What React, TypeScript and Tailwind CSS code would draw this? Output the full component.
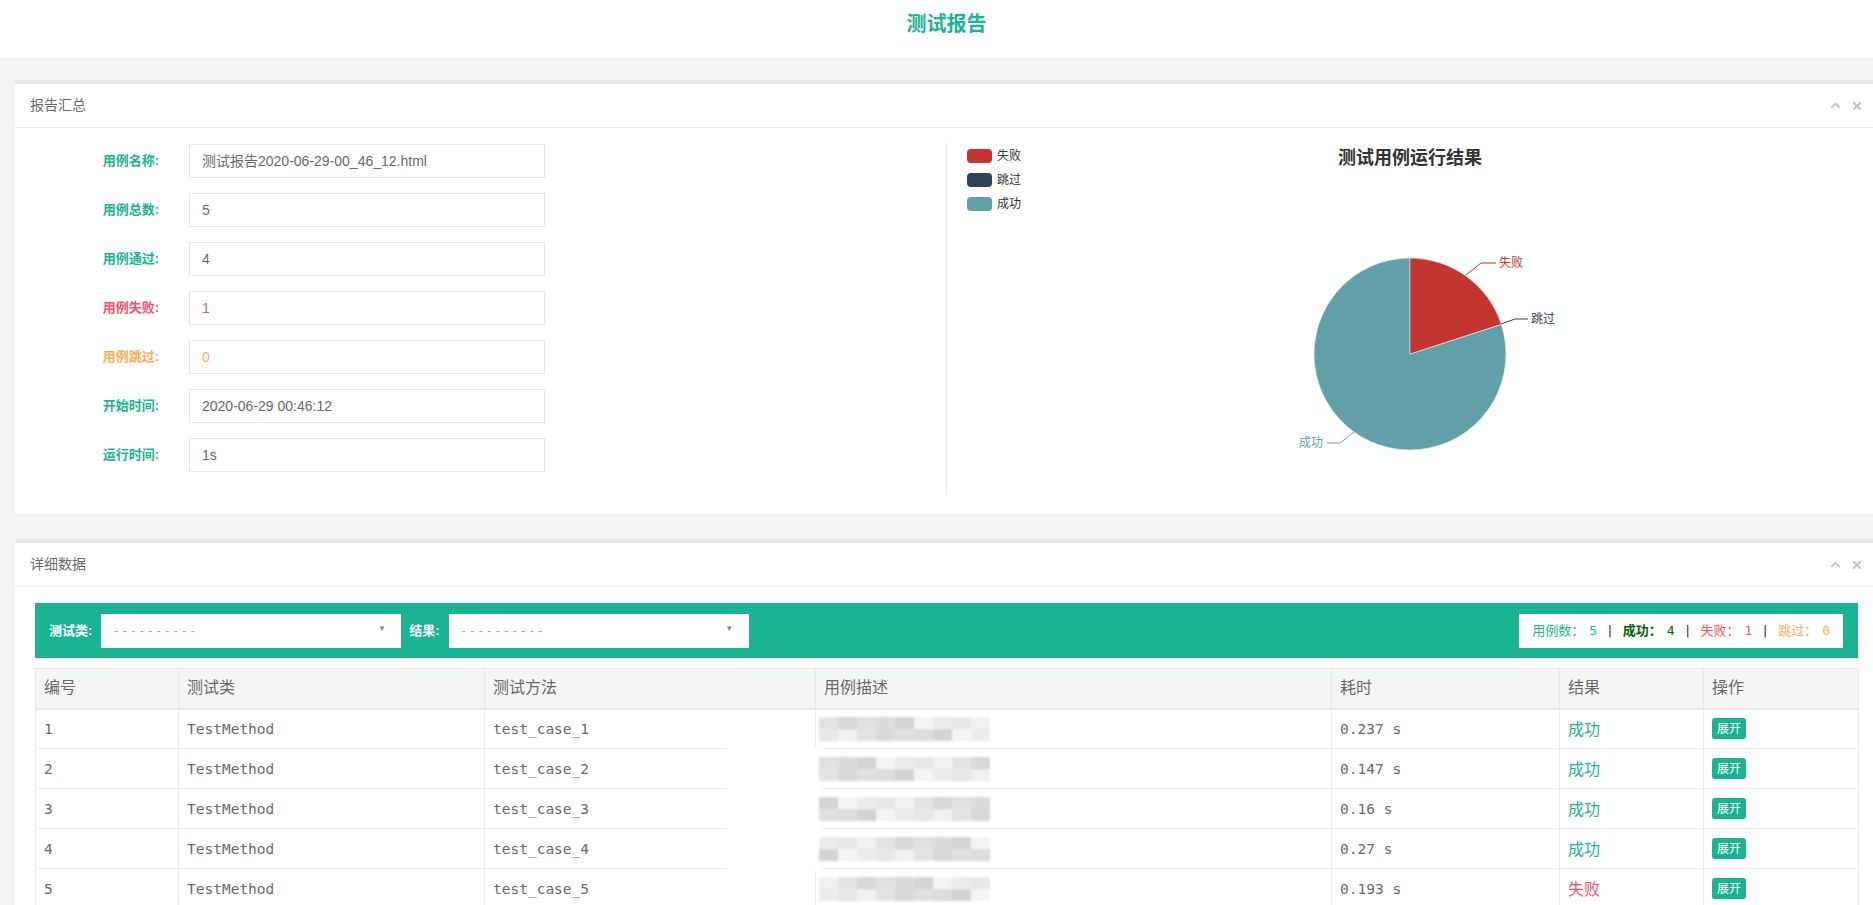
import { FaChevronUp, FaTimes } from "react-icons/fa";

// form rows in the "报告汇总" panel
const SUMMARY = [
  { label: "用例名称:", value: "测试报告2020-06-29-00_46_12.html", labelCls: "text-[#1ab394]", valueCls: "text-[#676a6c]" },
  { label: "用例总数:", value: "5", labelCls: "text-[#1ab394]", valueCls: "text-[#676a6c]" },
  { label: "用例通过:", value: "4", labelCls: "text-[#1ab394]", valueCls: "text-[#676a6c]" },
  { label: "用例失败:", value: "1", labelCls: "text-[#ed5565]", valueCls: "text-[#ed5565]" },
  { label: "用例跳过:", value: "0", labelCls: "text-[#f8ac59]", valueCls: "text-[#f8ac59]" },
  { label: "开始时间:", value: "2020-06-29 00:46:12", labelCls: "text-[#1ab394]", valueCls: "text-[#676a6c]" },
  { label: "运行时间:", value: "1s", labelCls: "text-[#1ab394]", valueCls: "text-[#676a6c]" },
];

const CASES = [
  { id: 1, cls: "TestMethod", method: "test_case_1", time: "0.237 s", ok: true, mask: false },
  { id: 2, cls: "TestMethod", method: "test_case_2", time: "0.147 s", ok: true, mask: true },
  { id: 3, cls: "TestMethod", method: "test_case_3", time: "0.16 s", ok: true, mask: true },
  { id: 4, cls: "TestMethod", method: "test_case_4", time: "0.27 s", ok: true, mask: true },
  { id: 5, cls: "TestMethod", method: "test_case_5", time: "0.193 s", ok: false, mask: false },
];

const COLS = [
  { name: "编号", w: "w-[143px]" },
  { name: "测试类", w: "w-[306px]" },
  { name: "测试方法", w: "w-[331px]" },
  { name: "用例描述", w: "w-[516px]" },
  { name: "耗时", w: "w-[228px]" },
  { name: "结果", w: "w-[144px]" },
  { name: "操作", w: "w-[155px]" },
];

const SHADES = ["#e4e4e4", "#d6d6d6", "#eeeeee", "#cdcdcd", "#dfdfdf", "#f3f3f3", "#d2d2d2", "#e9e9e9", "#dadada"];

function Panel({ title, children }: { title: string; children: React.ReactNode }) {
  return (
    <div className="bg-white border-t-4 border-t-[#e7eaec] mb-[25px]">
      <div className="h-[44px] flex items-center justify-between px-[15px] border-b border-b-[#e7eaec]">
        <span className="text-[14px] text-[#676a6c]">{title}</span>
        <div className="flex items-center gap-[10px] text-[#c4c4c4]">
          <FaChevronUp size={11} />
          <FaTimes size={12} />
        </div>
      </div>
      <div className="px-[20px] pt-[15px] pb-[20px]">{children}</div>
    </div>
  );
}

// pixelated mask over the description text
function Smudge({ seed }: { seed: number }) {
  return (
    <div className="flex flex-col blur-[0.8px] opacity-85">
      {[0, 1].map((r) => (
        <div key={r} className="flex">
          {Array.from({ length: 9 }).map((_, j) => (
            <div
              key={j}
              className="w-[19px] h-[12px]"
              style={{ backgroundColor: SHADES[(seed * 4 + r * 5 + j * 2) % SHADES.length] }}
            />
          ))}
        </div>
      ))}
    </div>
  );
}

function PieChart() {
  const cx = 463;
  const cy = 211;
  const r = 96;
  const ex = cx + r * Math.sin((72 * Math.PI) / 180);
  const ey = cy - r * Math.cos((72 * Math.PI) / 180);
  return (
    <svg width="911" height="351" className="absolute left-0 top-0">
      {/* legend */}
      {[
        { name: "失败", color: "#c23531" },
        { name: "跳过", color: "#2f4554" },
        { name: "成功", color: "#61a0a8" },
      ].map((l, i) => (
        <g key={l.name}>
          <rect x="20" y={6 + i * 24} width="25" height="14" rx="4" fill={l.color} />
          <text x="50" y={13 + i * 24} dominantBaseline="central" fontSize="12" fill="#333">
            {l.name}
          </text>
        </g>
      ))}
      <text x={cx} y="15" textAnchor="middle" dominantBaseline="central" fontSize="18" fontWeight="bold" fill="#333">
        测试用例运行结果
      </text>
      {/* slices */}
      <path d={`M${cx},${cy} L${ex},${ey} A${r},${r} 0 1,1 ${cx},${cy - r} Z`} fill="#61a0a8" stroke="#fff" strokeWidth="0.5" />
      <path d={`M${cx},${cy} L${cx},${cy - r} A${r},${r} 0 0,1 ${ex},${ey} Z`} fill="#c23531" stroke="#fff" strokeWidth="0.5" />
      {/* label lines */}
      <polyline points="519,132 534,120 549,120" fill="none" stroke="#c23531" />
      <text x="552" y="120" dominantBaseline="central" fontSize="12" fill="#c23531">失败</text>
      <polyline points="554,181 568,176 581,176" fill="none" stroke="#2f4554" />
      <text x="584" y="176" dominantBaseline="central" fontSize="12" fill="#2f4554">跳过</text>
      <polyline points="407,289 393,300 380,300" fill="none" stroke="#61a0a8" />
      <text x="376" y="300" textAnchor="end" dominantBaseline="central" fontSize="12" fill="#61a0a8">成功</text>
    </svg>
  );
}

function Select() {
  return (
    <div className="relative w-[300px] h-[34px] bg-white flex items-center px-[13px] text-[12px] text-[#a0a0a0] tracking-[4.5px]">
      ----------
      <span className="absolute right-[11px] top-[9px] text-[8px] text-[#888]">▼</span>
    </div>
  );
}

export default function App() {
  return (
    <div className="h-[905px] w-full overflow-hidden bg-[#f3f3f4] font-['Liberation_Sans','Noto_Sans_CJK_SC',sans-serif] text-[#676a6c]">
      <div className="w-[1893px]">
        {/* top title */}
        <div className="h-[58px] bg-white flex justify-center pt-[10px]">
          <h1 className="text-[20px] leading-[28px] font-bold text-[#1ab394]">测试报告</h1>
        </div>

        <div className="px-[15px] pt-[22px]">
          <Panel title="报告汇总">
            <div className="grid grid-cols-2 h-[351px]">
              <div className="border-r border-r-[#e7eaec] flex flex-col gap-[15px] pt-[1px]">
                {SUMMARY.map((s) => (
                  <div key={s.label} className="flex items-center h-[34px]">
                    <div className={`w-[124px] text-right text-[13px] font-bold ${s.labelCls}`}>{s.label}</div>
                    <div className={`ml-[30px] w-[356px] h-[34px] border border-[#e5e6e7] flex items-center px-[12px] text-[14px] ${s.valueCls}`}>
                      {s.value}
                    </div>
                  </div>
                ))}
              </div>
              <div className="relative">
                <PieChart />
              </div>
            </div>
          </Panel>

          <Panel title="详细数据">
            <div className="h-[55px] mt-[1px] bg-[#1ab394] flex items-center pl-[14px] pr-[15px]">
              <span className="text-white font-bold text-[13px]">测试类:</span>
              <div className="ml-[9px]">
                <Select />
              </div>
              <span className="ml-[8px] text-white font-bold text-[13px]">结果:</span>
              <div className="ml-[9px]">
                <Select />
              </div>
              <div className="ml-auto h-[34px] bg-white flex items-center px-[13px] text-[13px] font-['DejaVu_Sans_Mono','Noto_Sans_CJK_SC',monospace]">
                <span className="text-[#1ab394]">用例数：</span>
                <span className="ml-[5px] text-[#1ab394]">5</span>
                <span className="mx-[9px] text-[#333]">|</span>
                <span className="font-bold text-[#006400]">成功：</span>
                <span className="ml-[5px] text-[#006400]">4</span>
                <span className="mx-[9px] text-[#333]">|</span>
                <span className="text-[#ed5565]">失败：</span>
                <span className="ml-[5px] text-[#ed5565]">1</span>
                <span className="mx-[9px] text-[#333]">|</span>
                <span className="text-[#f8ac59]">跳过：</span>
                <span className="ml-[5px] text-[#f8ac59]">0</span>
              </div>
            </div>

            <table className="mt-[10px] w-full table-fixed border-collapse border border-[#e7e7e7]">
              <thead>
                <tr>
                  {COLS.map((c) => (
                    <th
                      key={c.name}
                      className={`${c.w} h-[40px] bg-[#f5f5f6] border border-[#e7e7e7] border-b-2 px-[8px] text-left text-[16px] font-normal text-[#676a6c]`}
                    >
                      {c.name}
                    </th>
                  ))}
                </tr>
              </thead>
              <tbody className="font-['DejaVu_Sans_Mono','Noto_Sans_CJK_SC',monospace] text-[14.5px] text-[#676a6c]">
                {CASES.map((c) => (
                  <tr key={c.id} className="h-[40px]">
                    <td className="border border-[#ebebeb] px-[8px] pt-[2px]">{c.id}</td>
                    <td className="border border-[#ebebeb] px-[8px] pt-[2px]">{c.cls}</td>
                    <td className="border border-[#ebebeb] px-[8px] pt-[2px]">{c.method}</td>
                    <td className="relative border border-[#ebebeb] px-[3px]">
                      {c.mask && (
                        <div className="absolute -left-[90px] -top-[2px] w-[96px] h-[44px] bg-white blur-[1px]" />
                      )}
                      <div className="relative">
                        <Smudge seed={c.id} />
                      </div>
                    </td>
                    <td className="border border-[#ebebeb] px-[8px] pt-[2px]">{c.time}</td>
                    <td
                      className={`border border-[#ebebeb] px-[8px] pt-[2px] text-[16px] font-['Liberation_Sans','Noto_Sans_CJK_SC',sans-serif] ${
                        c.ok ? "text-[#1ab394]" : "text-[#ed5565]"
                      }`}
                    >
                      {c.ok ? "成功" : "失败"}
                    </td>
                    <td className="border border-[#ebebeb] px-[8px]">
                      <span className="inline-flex w-[34px] h-[21px] items-center justify-center rounded-[3px] bg-[#1ab394] text-white text-[12px] font-['Liberation_Sans','Noto_Sans_CJK_SC',sans-serif]">
                        展开
                      </span>
                    </td>
                  </tr>
                ))}
              </tbody>
            </table>
          </Panel>
        </div>
      </div>
    </div>
  );
}
